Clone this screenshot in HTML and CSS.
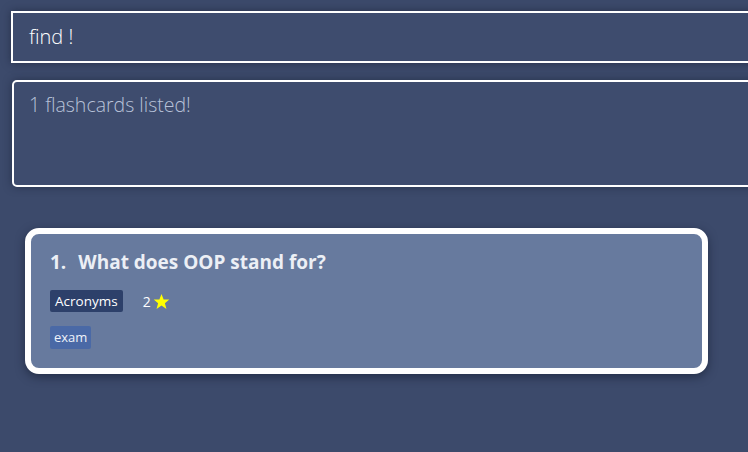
FILE: index.html
```html
<!DOCTYPE html>
<html>
<head>
<meta charset="utf-8">
<link rel="stylesheet" href="styles.css">
</head>
<body>
<div class="page">
  <div class="command-box">find !</div>
  <div class="result-box">1 flashcards listed!</div>
  <div class="list">
    <div class="card">
      <div class="title"><span class="idx">1.</span>What does OOP stand for?</div>
      <div class="meta">
        <span class="category">Acronyms</span>
        <span class="rating">2 <svg class="star" width="17" height="17" viewBox="0 0 24 24"><polygon points="12,1.5 15,9 23,9.3 16.8,14.3 19,22.5 12,17.8 5,22.5 7.2,14.3 1,9.3 9,9" fill="#ffff00"/></svg></span>
      </div>
      <div class="tags"><span class="tag">exam</span></div>
    </div>
  </div>
</div>
</body>
</html>
```

FILE: styles.css
```css
html, body {
  margin: 0;
  padding: 0;
  overflow: hidden;
  width: 748px;
  height: 452px;
  background: #3c4a6b;
}
.page {
  display: flex;
  flex-direction: column;
  width: 780px;
}
.command-box {
  margin: 11px 0 0 11px;
  height: 48px;
  border: 2px solid #ffffff;
  box-shadow: 0 0 8px rgba(20, 28, 48, 0.55);
  background: #3e4c6e;
  color: #ffffff;
  font-family: "Open Sans", sans-serif;
  font-weight: 300;
  font-size: 20px;
  line-height: 48px;
  padding-left: 16px;
  box-sizing: content-box;
}
.result-box {
  margin: 17px 0 0 12px;
  height: 107px;
  border: 2px solid #ffffff;
  border-radius: 5px;
  box-shadow: 0 0 8px rgba(20, 28, 48, 0.5);
  background: #3e4c6e;
  color: #b8c2d8;
  font-family: "Open Sans", sans-serif;
  font-weight: 300;
  font-size: 19.5px;
  padding: 9px 0 0 15px;
  box-sizing: border-box;
}
.list {
  padding: 41px 0 0 25px;
}
.card {
  width: 683px;
  height: 146px;
  box-sizing: border-box;
  border: 6px solid #ffffff;
  border-radius: 14px;
  background: #677a9e;
  box-shadow: 0 3px 10px rgba(20, 28, 48, 0.6);
  padding: 15px 0 0 19px;
  display: flex;
  flex-direction: column;
}
.title {
  font-family: "Open Sans", sans-serif;
  font-weight: 700;
  font-size: 19px;
  color: #eceff5;
  line-height: 26px;
}
.idx {
  margin-right: 12px;
}
.meta {
  margin-top: 15px;
  display: flex;
  align-items: center;
}
.category {
  background: #2d406a;
  color: #ffffff;
  font-family: "Open Sans", sans-serif;
  font-size: 13.5px;
  line-height: 22px;
  padding: 0 5px;
  border-radius: 2px;
}
.rating {
  margin-left: 20px;
  color: #ffffff;
  font-family: "Open Sans", sans-serif;
  font-size: 14px;
  display: flex;
  align-items: center;
  gap: 2px;
}
.tags {
  margin-top: 14px;
  display: flex;
}
.tag {
  background: #4a69a6;
  color: #eef2fa;
  font-family: "Open Sans", sans-serif;
  font-size: 13px;
  line-height: 23px;
  padding: 0 4px;
  border-radius: 2px;
}
```
